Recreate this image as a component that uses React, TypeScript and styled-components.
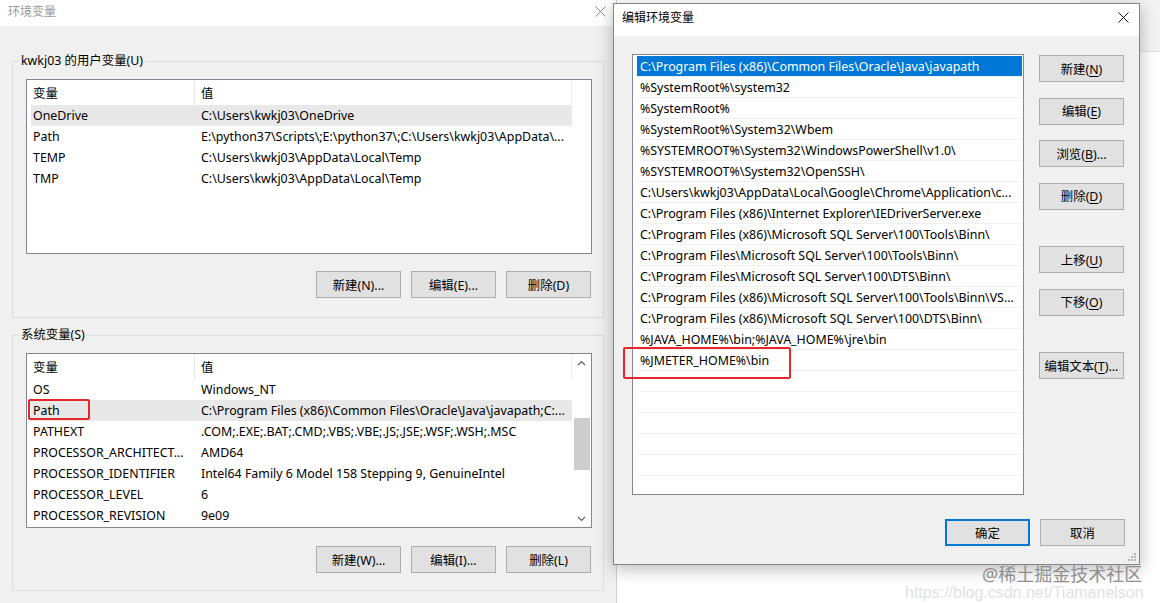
import React from "react";
import styled, { createGlobalStyle } from "styled-components";

const GlobalStyle = createGlobalStyle`
  html, body {
    margin: 0;
    padding: 0;
    background: #fff;
  }
  body {
    font-family: "Noto Sans", "Noto Sans CJK SC", sans-serif;
    font-size: 12.4px;
    color: #000;
  }
`;

const Desktop = styled.div`
  position: relative;
  width: 1160px;
  height: 603px;
  overflow: hidden;
  background: #fff;
`;

const BackApp = styled.div`
  position: absolute;
  left: 1080px;
  top: 0;
  width: 80px;
  height: 603px;
  background: #fff;
`;

const BackAppHeader = styled.div`
  height: 51px;
  background: #f3f3f3;
  border-bottom: 1px solid #e2e2e2;
`;

const EnvWindow = styled.div`
  position: absolute;
  left: 0;
  top: 0;
  width: 616px;
  height: 640px;
  background: #f0f0f0;
  border-right: 1px solid #cfcfcf;
  display: flex;
  flex-direction: column;
`;

const TitleBar = styled.div<{ $active?: boolean }>`
  flex-shrink: 0;
  height: ${(p) => (p.$active ? 32 : 26)}px;
  box-sizing: border-box;
  padding: 0 10px ${(p) => (p.$active ? 6 : 4)}px 8px;
  background: #fff;
  display: flex;
  align-items: center;
  justify-content: space-between;
  font-size: 12px;
  color: ${(p) => (p.$active ? "#000" : "#9a9a9a")};
`;

const WindowBody = styled.div`
  padding-top: 27px;
  display: flex;
  flex-direction: column;
`;

const Group = styled.fieldset<{ $gap?: number }>`
  margin: ${(p) => p.$gap ?? 0}px 0 0 12px;
  width: 592px;
  box-sizing: border-box;
  border: 1px solid #dcdcdc;
  padding: 10px 11px ${(p) => (p.$gap ? 17 : 19)}px 6px;
  min-inline-size: 0;
`;

const Legend = styled.legend`
  padding: 0 2px;
  line-height: 16px;
  font-size: 12.4px;
`;

const ListView = styled.div`
  margin-left: 7px;
  height: 175px;
  box-sizing: border-box;
  border: 1px solid #828790;
  background: #fff;
  display: flex;
  overflow: hidden;
`;

const ListMain = styled.div`
  width: 545px;
  display: flex;
  flex-direction: column;
`;

const HeaderRow = styled.div`
  display: flex;
  height: 25px;
  border-right: 1px solid #ececec;
`;

const HeaderCell = styled.div<{ $first?: boolean }>`
  display: flex;
  align-items: center;
  padding-left: 6px;
  box-sizing: border-box;
  ${(p) => (p.$first ? "width: 168px; border-right: 1px solid #e5e5e5;" : "flex: 1;")}
`;

const Row = styled.div<{ $selected?: boolean }>`
  display: flex;
  align-items: center;
  height: 21px;
  margin-left: 4px;
  background: ${(p) => (p.$selected ? "#e8e8e8" : "transparent")};
  white-space: nowrap;
`;

const Cell = styled.div<{ $first?: boolean }>`
  box-sizing: border-box;
  padding-left: ${(p) => (p.$first ? 2 : 6)}px;
  ${(p) => (p.$first ? "width: 164px;" : "flex: 1;")}
  overflow: hidden;
`;

const SideArea = styled.div`
  flex: 1;
  display: flex;
  justify-content: center;
`;

const ScrollBar = styled.div`
  width: 16px;
  display: flex;
  flex-direction: column;
  align-items: stretch;
`;

const ScrollArrow = styled.div`
  height: 17px;
  display: flex;
  align-items: center;
  justify-content: center;
`;

const ScrollTrack = styled.div`
  flex: 1;
`;

const ScrollThumb = styled.div`
  margin-top: 47px;
  height: 52px;
  background: #cdcdcd;
`;

const ButtonRow = styled.div<{ $top?: number }>`
  display: flex;
  justify-content: flex-end;
  gap: 10px;
  margin-top: ${(p) => p.$top ?? 17}px;
  margin-right: 1px;
`;

const Button = styled.button<{ $default?: boolean }>`
  width: 85px;
  height: 27px;
  padding: 0;
  box-sizing: border-box;
  background: #e1e1e1;
  border: ${(p) => (p.$default ? "2px solid #0078d7" : "1px solid #adadad")};
  font-family: "Noto Sans", "Noto Sans CJK SC", sans-serif;
  font-size: 12.4px;
  color: #000;
  white-space: nowrap;
  u {
    text-underline-offset: 2px;
  }
`;

const Dialog = styled.div`
  position: absolute;
  left: 613px;
  top: 3px;
  width: 527px;
  height: 562px;
  box-sizing: border-box;
  border: 1px solid #858585;
  background: #f0f0f0;
  box-shadow: 0 4px 16px rgba(0, 0, 0, 0.28);
  display: flex;
  flex-direction: column;
`;

const DialogBody = styled.div`
  position: relative;
  flex: 1;
  padding: 18px 14px 0 18px;
  display: flex;
  flex-direction: column;
`;

const DialogMain = styled.div`
  display: flex;
  gap: 15px;
`;

const PathList = styled.div`
  width: 392px;
  height: 441px;
  box-sizing: border-box;
  border: 1px solid #828790;
  background: #fff;
  padding: 1px 1px 0 4px;
  overflow: hidden;
`;

const PathRow = styled.div<{ $selected?: boolean }>`
  height: 21px;
  box-sizing: border-box;
  border-bottom: 1px solid #f0f0f0;
  padding-left: 3px;
  display: flex;
  align-items: center;
  white-space: nowrap;
  background: ${(p) => (p.$selected ? "#0078d7" : "transparent")};
  color: ${(p) => (p.$selected ? "#fff" : "#000")};
`;

const SideButtons = styled.div`
  margin-top: 1px;
  display: flex;
  flex-direction: column;
  gap: 15.5px;
`;

const SideButton = styled(Button)<{ $spaced?: boolean }>`
  margin-top: ${(p) => (p.$spaced ? 21 : 0)}px;
`;

const DialogFooter = styled.div`
  margin-top: 24px;
  display: flex;
  justify-content: flex-end;
  gap: 10px;
`;

const Grip = styled.svg`
  position: absolute;
  right: 2px;
  bottom: 2px;
`;

const Highlight = styled.div<{ $x: number; $y: number; $w: number; $h: number }>`
  position: absolute;
  left: ${(p) => p.$x}px;
  top: ${(p) => p.$y}px;
  width: ${(p) => p.$w}px;
  height: ${(p) => p.$h}px;
  box-sizing: border-box;
  border: 2px solid #e5262b;
  border-radius: 2px;
`;

const CsdnMark = styled.div`
  position: absolute;
  left: 905px;
  top: 583px;
  font-family: "Liberation Sans", Arial, sans-serif;
  font-size: 16px;
  line-height: 20px;
  color: #e2e2e2;
  white-space: nowrap;
`;

const JuejinMark = styled.div`
  position: absolute;
  left: 982px;
  top: 562px;
  font-family: "Noto Sans", "Noto Sans CJK SC", sans-serif;
  font-size: 18px;
  line-height: 24px;
  color: #8f8f8f;
  white-space: nowrap;
`;

function CloseIcon({ color }: { color: string }) {
  return (
    <svg width="11" height="11" viewBox="0 0 11 11">
      <path d="M0.5 0.5 L10.5 10.5 M10.5 0.5 L0.5 10.5" stroke={color} strokeWidth="1" />
    </svg>
  );
}

function Chevron({ up }: { up?: boolean }) {
  return (
    <svg width="9" height="6" viewBox="0 0 9 6">
      <polyline
        points={up ? "1,5 4.5,1.5 8,5" : "1,1 4.5,4.5 8,1"}
        fill="none"
        stroke="#606060"
        strokeWidth="1.2"
      />
    </svg>
  );
}

const userVars = [
  ["OneDrive", "C:\\Users\\kwkj03\\OneDrive"],
  ["Path", "E:\\python37\\Scripts\\;E:\\python37\\;C:\\Users\\kwkj03\\AppData\\..."],
  ["TEMP", "C:\\Users\\kwkj03\\AppData\\Local\\Temp"],
  ["TMP", "C:\\Users\\kwkj03\\AppData\\Local\\Temp"],
];

const sysVars = [
  ["OS", "Windows_NT"],
  ["Path", "C:\\Program Files (x86)\\Common Files\\Oracle\\Java\\javapath;C:..."],
  ["PATHEXT", ".COM;.EXE;.BAT;.CMD;.VBS;.VBE;.JS;.JSE;.WSF;.WSH;.MSC"],
  ["PROCESSOR_ARCHITECT...", "AMD64"],
  ["PROCESSOR_IDENTIFIER", "Intel64 Family 6 Model 158 Stepping 9, GenuineIntel"],
  ["PROCESSOR_LEVEL", "6"],
  ["PROCESSOR_REVISION", "9e09"],
];

const paths = [
  "C:\\Program Files (x86)\\Common Files\\Oracle\\Java\\javapath",
  "%SystemRoot%\\system32",
  "%SystemRoot%",
  "%SystemRoot%\\System32\\Wbem",
  "%SYSTEMROOT%\\System32\\WindowsPowerShell\\v1.0\\",
  "%SYSTEMROOT%\\System32\\OpenSSH\\",
  "C:\\Users\\kwkj03\\AppData\\Local\\Google\\Chrome\\Application\\c...",
  "C:\\Program Files (x86)\\Internet Explorer\\IEDriverServer.exe",
  "C:\\Program Files (x86)\\Microsoft SQL Server\\100\\Tools\\Binn\\",
  "C:\\Program Files\\Microsoft SQL Server\\100\\Tools\\Binn\\",
  "C:\\Program Files\\Microsoft SQL Server\\100\\DTS\\Binn\\",
  "C:\\Program Files (x86)\\Microsoft SQL Server\\100\\Tools\\Binn\\VS...",
  "C:\\Program Files (x86)\\Microsoft SQL Server\\100\\DTS\\Binn\\",
  "%JAVA_HOME%\\bin;%JAVA_HOME%\\jre\\bin",
  "%JMETER_HOME%\\bin",
  "", "", "", "", "", "",
];

function VarList({
  rows,
  selected,
  scroll,
}: {
  rows: string[][];
  selected: number;
  scroll?: boolean;
}) {
  return (
    <ListView>
      <ListMain>
        <HeaderRow>
          <HeaderCell $first>变量</HeaderCell>
          <HeaderCell>值</HeaderCell>
        </HeaderRow>
        {rows.map(([name, value], i) => (
          <Row key={name} $selected={i === selected}>
            <Cell $first>{name}</Cell>
            <Cell>{value}</Cell>
          </Row>
        ))}
      </ListMain>
      <SideArea>
        {scroll && (
          <ScrollBar>
            <ScrollArrow>
              <Chevron up />
            </ScrollArrow>
            <ScrollTrack>
              <ScrollThumb />
            </ScrollTrack>
            <ScrollArrow>
              <Chevron />
            </ScrollArrow>
          </ScrollBar>
        )}
      </SideArea>
    </ListView>
  );
}

export default function App() {
  return (
    <>
      <GlobalStyle />
      <Desktop>
        <BackApp>
          <BackAppHeader />
        </BackApp>

        <EnvWindow>
          <TitleBar>
            <span>环境变量</span>
            <CloseIcon color="#8a8a8a" />
          </TitleBar>
          <WindowBody>
            <Group>
              <Legend>kwkj03 的用户变量(U)</Legend>
              <VarList rows={userVars} selected={0} />
              <ButtonRow>
                <Button>新建(N)...</Button>
                <Button>编辑(E)...</Button>
                <Button>删除(D)</Button>
              </ButtonRow>
            </Group>
            <Group $gap={9}>
              <Legend>系统变量(S)</Legend>
              <VarList rows={sysVars} selected={1} scroll />
              <ButtonRow $top={18}>
                <Button>新建(W)...</Button>
                <Button>编辑(I)...</Button>
                <Button>删除(L)</Button>
              </ButtonRow>
            </Group>
          </WindowBody>
        </EnvWindow>

        <Dialog>
          <TitleBar $active>
            <span>编辑环境变量</span>
            <CloseIcon color="#111" />
          </TitleBar>
          <DialogBody>
            <DialogMain>
              <PathList>
                {paths.map((p, i) => (
                  <PathRow key={i} $selected={i === 0}>
                    {p}
                  </PathRow>
                ))}
              </PathList>
              <SideButtons>
                <SideButton>
                  新建(<u>N</u>)
                </SideButton>
                <SideButton>
                  编辑(<u>E</u>)
                </SideButton>
                <SideButton>
                  浏览(<u>B</u>)...
                </SideButton>
                <SideButton>
                  删除(<u>D</u>)
                </SideButton>
                <SideButton $spaced>
                  上移(<u>U</u>)
                </SideButton>
                <SideButton>
                  下移(<u>O</u>)
                </SideButton>
                <SideButton $spaced>
                  编辑文本(<u>T</u>)...
                </SideButton>
              </SideButtons>
            </DialogMain>
            <DialogFooter>
              <Button $default>确定</Button>
              <Button>取消</Button>
            </DialogFooter>
            <Grip width="9" height="9" viewBox="0 0 9 9">
              {[
                [6, 0],
                [3, 3],
                [6, 3],
                [0, 6],
                [3, 6],
                [6, 6],
              ].map(([x, y]) => (
                <rect key={`${x}-${y}`} x={x} y={y} width="2" height="2" fill="#b4b4b4" />
              ))}
            </Grip>
          </DialogBody>
        </Dialog>

        <Highlight $x={28} $y={399} $w={62} $h={21} />
        <Highlight $x={623} $y={347} $w={168} $h={32} />

        <CsdnMark>https://blog.csdn.net/Tiamanelson</CsdnMark>
        <JuejinMark>@稀土掘金技术社区</JuejinMark>
      </Desktop>
    </>
  );
}
